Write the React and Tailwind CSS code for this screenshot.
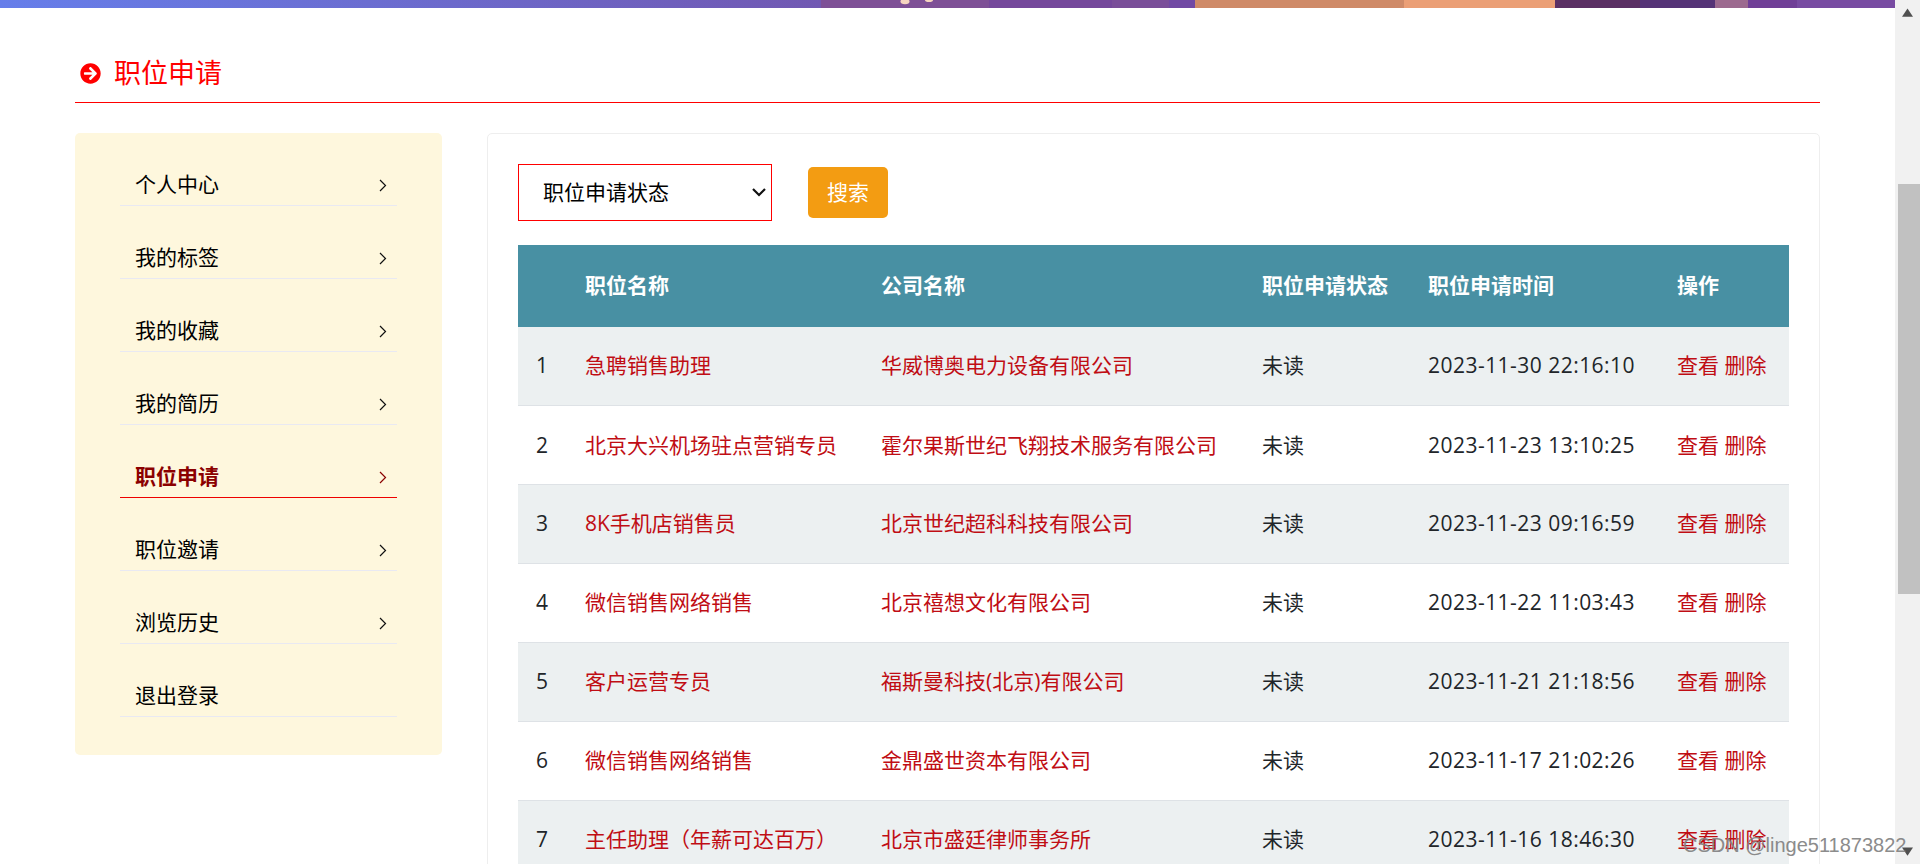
import React from 'react';
import { FaArrowCircleRight } from 'react-icons/fa';

const F = { fontFamily: '"Open Sans","Noto Sans CJK SC",sans-serif' };

const menu = ['个人中心', '我的标签', '我的收藏', '我的简历', '职位申请', '职位邀请', '浏览历史', '退出登录'];

const rows = [
  ['急聘销售助理', '华威博奥电力设备有限公司', '2023-11-30 22:16:10'],
  ['北京大兴机场驻点营销专员', '霍尔果斯世纪飞翔技术服务有限公司', '2023-11-23 13:10:25'],
  ['8K手机店销售员', '北京世纪超科科技有限公司', '2023-11-23 09:16:59'],
  ['微信销售网络销售', '北京禧想文化有限公司', '2023-11-22 11:03:43'],
  ['客户运营专员', '福斯曼科技(北京)有限公司', '2023-11-21 21:18:56'],
  ['微信销售网络销售', '金鼎盛世资本有限公司', '2023-11-17 21:02:26'],
  ['主任助理（年薪可达百万）', '北京市盛廷律师事务所', '2023-11-16 18:46:30'],
];

function Strip() {
  const segs = [
    [821, 168, '#7e5096'], [989, 123, '#75489b'], [1112, 57, '#7a4e99'], [1169, 26, '#7149a4'],
    [1195, 209, '#cf8a68'], [1404, 151, '#eb9f76'], [1555, 85, '#5b3064'], [1640, 75, '#553377'],
    [1715, 33, '#9c6a8f'], [1748, 49, '#703f97'], [1797, 98, '#784ba2'],
  ];
  return (
    <svg width="1895" height="8" viewBox="0 0 1895 8" className="block shrink-0">
      <defs>
        <linearGradient id="g" x1="0" x2="1" y1="0" y2="0">
          <stop offset="0" stopColor="#667eea" />
          <stop offset="1" stopColor="#7158b2" />
        </linearGradient>
      </defs>
      <rect x="0" y="0" width="821" height="8" fill="url(#g)" />
      {segs.map(([x, w, c]) => <rect key={x} x={x} y="0" width={w} height="8" fill={c} />)}
      <ellipse cx="905" cy="1.5" rx="4.5" ry="2.8" fill="#f6d5c0" />
      <ellipse cx="929" cy="0" rx="4" ry="2" fill="#f6d5c0" />
    </svg>
  );
}

function Chevron({ color }) {
  return (
    <svg width="8" height="13" viewBox="0 0 8 13" fill="none" stroke={color} strokeWidth="1.2" className="mt-[2px]">
      <path d="M1 1l5.5 5.5L1 12" />
    </svg>
  );
}

export default function App() {
  return (
    <div className="flex h-[864px] w-full overflow-hidden bg-white" style={F}>
      <div className="flex min-w-0 flex-1 flex-col">
        <Strip />
        <div className="ml-[75px] mr-[75px] mt-[39px] flex flex-col">
          <div className="flex h-[56px] items-start gap-[13px] border-b border-[#ff0000] text-[#ff0000]">
            <FaArrowCircleRight className="ml-[5px] mt-[16px] h-[21px] w-[21px]" />
            <span className="text-[27px] leading-[52px]">职位申请</span>
          </div>
          <div className="mt-[30px] flex items-start gap-[45px]">
            <div className="flex h-[622px] w-[367px] shrink-0 flex-col gap-[31px] rounded-[5px] bg-[#fef7dd] px-[45px] pt-[31px]">
              {menu.map((m, i) => (
                <div
                  key={m}
                  className={
                    i === 4
                      ? 'flex h-[42px] items-center justify-between border-b border-[#ee0000] pl-[15px] pr-[10px] text-[21px] font-bold text-[#8b0000]'
                      : 'flex h-[42px] items-center justify-between border-b border-[#e9e9f2] pl-[15px] pr-[10px] text-[21px] text-black'
                  }
                >
                  <span>{m}</span>
                  {i < 7 && <Chevron color={i === 4 ? '#8b0000' : '#111'} />}
                </div>
              ))}
            </div>
            <div className="h-[760px] flex-1 rounded-[5px] border border-[#eeeeee] px-[30px] pt-[30px]">
              <div className="flex items-center gap-[36px]">
                <div className="relative flex h-[57px] w-[254px] items-center border border-[#ff0000] pl-[24px] text-[21px] text-black">
                  职位申请状态
                  <svg width="14" height="9" viewBox="0 0 14 9" fill="none" stroke="#111" strokeWidth="2.2" className="absolute right-[5px] top-[23px]">
                    <path d="M1 1l6 6 6-6" />
                  </svg>
                </div>
                <div className="flex h-[51px] w-[80px] items-center justify-center rounded-[5px] bg-[#f39c12] text-[21px] text-white">搜索</div>
              </div>
              <table className="mt-[24px] w-[1271px] table-fixed border-collapse text-left text-[21px]">
                <colgroup>
                  <col className="w-[49px]" />
                  <col className="w-[296px]" />
                  <col className="w-[381px]" />
                  <col className="w-[166px]" />
                  <col className="w-[249px]" />
                  <col className="w-[130px]" />
                </colgroup>
                <thead>
                  <tr className="h-[82px] bg-[#4890a3] font-bold text-white">
                    <th className="pl-[18px]"></th>
                    <th className="pl-[18px] font-bold">职位名称</th>
                    <th className="pl-[18px] font-bold">公司名称</th>
                    <th className="pl-[18px] font-bold whitespace-nowrap">职位申请状态</th>
                    <th className="pl-[18px] font-bold whitespace-nowrap">职位申请时间</th>
                    <th className="pl-[18px] font-bold">操作</th>
                  </tr>
                </thead>
                <tbody>
                  {rows.map((r, i) => (
                    <tr key={i} className={i % 2 === 0 ? 'h-[78.9px] border-b border-[#dee2e6] bg-[#ecf0f1]' : 'h-[78.9px] border-b border-[#dee2e6] bg-white'}>
                      <td className="pl-[18px] text-[#212529]">{i + 1}</td>
                      <td className="pl-[18px] whitespace-nowrap text-[#c00d14]">{r[0]}</td>
                      <td className="pl-[18px] whitespace-nowrap text-[#c00d14]">{r[1]}</td>
                      <td className="pl-[18px] text-[#212529]">未读</td>
                      <td className="pl-[18px] whitespace-nowrap tracking-[0.47px] text-[#212529]">{r[2]}</td>
                      <td className="pl-[18px] whitespace-nowrap text-[#c00d14]">查看 删除</td>
                    </tr>
                  ))}
                </tbody>
              </table>
            </div>
          </div>
        </div>
      </div>
      <div className="flex h-[864px] w-[25px] shrink-0 flex-col bg-[#f1f1f1]">
        <div className="flex h-[25px] shrink-0 items-center justify-center">
          <svg width="11" height="9" viewBox="0 0 12 9"><path d="M6 0l6 9H0z" fill="#505050" /></svg>
        </div>
        <div className="mt-[159px] h-[410px] w-[22px] self-end bg-[#c1c1c1]"></div>
        <div className="mt-auto flex h-[25px] shrink-0 items-center justify-center">
          <svg width="11" height="9" viewBox="0 0 12 9"><path d="M6 9L0 0h12z" fill="#505050" /></svg>
        </div>
      </div>
      <div className="pointer-events-none absolute left-[1683px] top-[830px] text-[20px] text-[#808080] opacity-90" style={{ fontFamily: '"Liberation Sans",sans-serif' }}>CSDN @linge511873822</div>
    </div>
  );
}
